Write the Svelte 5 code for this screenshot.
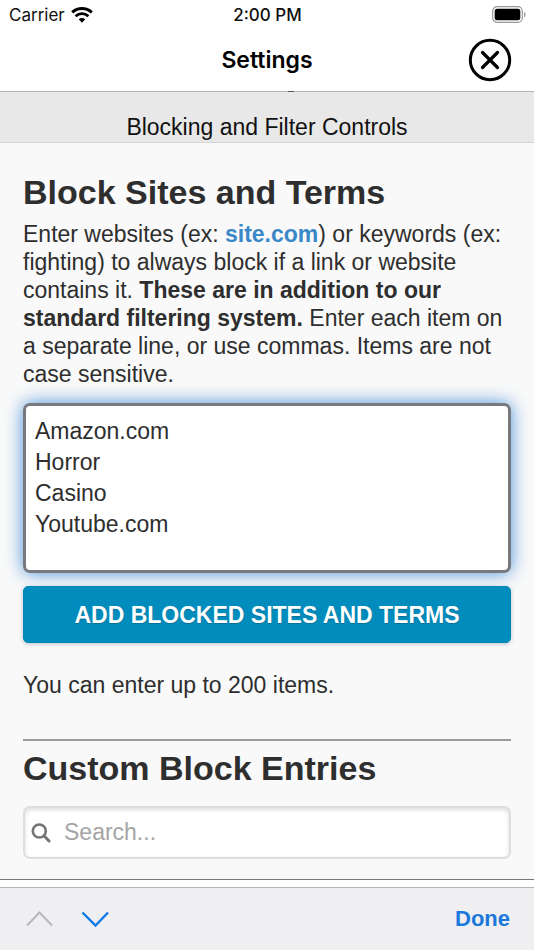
<script lang="ts">
	let terms = $state('Amazon.com\nHorror\nCasino\nYoutube.com');
	let search = $state('');
</script>

<div class="screen">
	<div class="status-bar">
		<div class="carrier">
			<span>Carrier</span>
			<svg width="22" height="16" viewBox="0 0 22 16" aria-hidden="true">
				<path d="M1.200 5.400C7 .3 15 .3 20.800 5.400" fill="none" stroke="#000" stroke-width="3" />
				<path d="M4.600 9.200c3.700-3.400 9.100-3.400 12.800 0" fill="none" stroke="#000" stroke-width="2.800" />
				<path d="M7.700 12.300c2-1.800 4.600-1.800 6.600 0L11 15.800z" fill="#000" />
			</svg>
		</div>
		<span class="time">2:00 PM</span>
		<svg class="battery" width="34" height="17" viewBox="0 0 34 17" aria-hidden="true">
			<rect x=".7" y=".7" width="29.600" height="15.600" rx="4.500" fill="#fff" stroke="#999" stroke-width="1.200" />
			<rect x="2.700" y="2.700" width="25.600" height="11.600" rx="2.500" fill="#000" />
			<path d="M32 5.700c2 .8 2 4.800 0 5.600z" fill="#999" />
		</svg>
	</div>

	<header class="nav-bar">
		<h1>Settings</h1>
		<button class="close" type="button" aria-label="Close">
			<svg width="44" height="44" viewBox="0 0 44 44" aria-hidden="true">
				<g fill="none" stroke="#000" stroke-linecap="round">
					<circle cx="22" cy="22" r="19.700" stroke-width="3" />
					<path d="M14.500 14.500l15 15M29.500 14.500l-15 15" stroke-width="3.200" />
				</g>
			</svg>
		</button>
	</header>

	<div class="section-bar">Blocking and Filter Controls</div>

	<main>
		<section>
			<h2><label for="terms">Block Sites and Terms</label></h2>
			<p>
				Enter websites (ex: <strong class="site">site.com</strong>) or keywords (ex: fighting) to
				always block if a link or website contains it.
				<strong>These are in addition to our standard filtering system.</strong>
				Enter each item on a separate line, or use commas. Items are not case sensitive.
			</p>
			<textarea id="terms" spellcheck="false" bind:value={terms}></textarea>
			<button class="add" type="button">ADD BLOCKED SITES AND TERMS</button>
			<p class="limit">You can enter up to 200 items.</p>
		</section>

		<hr />

		<section>
			<h2><label for="search">Custom Block Entries</label></h2>
			<div class="search">
				<svg width="20" height="20" viewBox="0 0 20 20" aria-hidden="true">
					<g fill="none" stroke="#757575" stroke-linecap="round">
						<circle cx="8.300" cy="8" r="6.500" stroke-width="2.600" />
						<path d="M13 12.800l5 5.200" stroke-width="3" />
					</g>
				</svg>
				<input id="search" type="text" placeholder="Search..." bind:value={search} />
			</div>
		</section>
	</main>

	<div class="keyboard-bar">
		<button type="button" aria-label="Previous field" disabled>
			<svg width="28" height="18" viewBox="0 0 28 18" aria-hidden="true">
				<path d="M2 15.500L14.500 2.500 27 15.500" fill="none" stroke="#b8b8ba" stroke-width="2" />
			</svg>
		</button>
		<button type="button" aria-label="Next field">
			<svg width="28" height="18" viewBox="0 0 28 18" aria-hidden="true">
				<path d="M1.500 2.500L14.500 15.500 27 2.500" fill="none" stroke="#0f78e6" stroke-width="2.400" />
			</svg>
		</button>
		<button class="done" type="button">Done</button>
	</div>
</div>

<style>
	:global(body) {
		margin: 0;
	}

	.screen {
		display: flex;
		flex-direction: column;
		min-height: 100vh;
		background: #fff;
		color: #2e2e2e;
		font-family: 'Liberation Sans', Arial, sans-serif;
		font-size: 23px;
	}

	button {
		padding: 0;
		border: 0;
		background: none;
		font: inherit;
	}

	svg {
		display: block;
	}

	.status-bar {
		display: grid;
		grid-template-columns: 1fr auto 1fr;
		align-items: center;
		height: 29px;
		padding: 0 8px 0 9px;
		box-sizing: border-box;
		color: #111;
		font-family: Inter, sans-serif;
		font-size: 17px;
	}

	.carrier {
		display: flex;
		align-items: center;
		gap: 6px;
	}

	.time {
		font-weight: 500;
	}

	.battery {
		justify-self: end;
	}

	.nav-bar {
		display: grid;
		grid-template-columns: 1fr auto 1fr;
		align-items: center;
		height: 63px;
		padding: 0 22px 1px;
		box-sizing: border-box;
		border-bottom: 1px solid #b4b4b4;
	}

	h1 {
		grid-column: 2;
		margin: 0;
		color: #000;
		font-family: Inter, sans-serif;
		font-size: 23px;
		font-weight: 600;
	}

	.close {
		justify-self: end;
	}

	.section-bar {
		position: relative;
		padding: 21px 0 1px;
		border-bottom: 1px solid #d4d4d4;
		background: #e8e8e8;
		color: #111;
		line-height: 28px;
		text-align: center;
	}

	/* tail of the scrolled title showing under the nav bar */
	.section-bar::before {
		position: absolute;
		top: -1px;
		left: 54%;
		width: 6px;
		height: 1px;
		background: #555;
		content: '';
	}

	main {
		flex: 1;
		padding: 31px 23px 20px;
		border-bottom: 1px solid #77777b;
		background: #f9f9f9;
	}

	h2 {
		margin: 0;
		font-size: 34px;
		line-height: 36px;
	}

	p {
		margin: 10px 0 15px;
		line-height: 28px;
	}

	.site {
		color: #3b88c8;
	}

	textarea {
		display: block;
		width: 100%;
		height: 170px;
		padding: 10px 9px;
		box-sizing: border-box;
		border: 3px solid #77797f;
		border-radius: 7px;
		outline: 0;
		box-shadow: 0 0 18px #4a90d9;
		background: #fff;
		color: #2e2e2e;
		font: inherit;
		line-height: 31px;
		resize: none;
	}

	.add {
		position: relative;
		display: block;
		width: 100%;
		height: 57px;
		margin: 13px 0 28px;
		padding-top: 2px;
		border: 1px solid #0587b4;
		border-radius: 5px;
		box-shadow: 0 1px 4px #b9c3cc;
		background: #008cbc;
		color: #fff;
		font-weight: 700;
		text-shadow: 0 1px 1px #087099;
	}

	.limit {
		margin: 0 0 40px;
	}

	hr {
		height: 2px;
		margin: 0 0 9px;
		border: 0;
		background: #9b9b9b;
	}

	.search {
		display: flex;
		align-items: center;
		gap: 13px;
		height: 53px;
		margin-top: 20px;
		padding: 0 6px;
		box-sizing: border-box;
		border: 2px solid #dedede;
		border-radius: 7px;
		box-shadow: inset 0 2px 4px #ddd;
		background: #fff;
	}

	.search input {
		flex: 1;
		min-width: 0;
		padding: 0;
		border: 0;
		outline: 0;
		background: transparent;
		color: #2e2e2e;
		font: inherit;
	}

	.search input::placeholder {
		color: #a5a5a5;
		opacity: 1;
	}

	.keyboard-bar {
		display: flex;
		align-items: center;
		gap: 28px;
		height: 63px;
		margin-top: 7px;
		padding: 0 24px 0 25px;
		box-sizing: border-box;
		border-top: 1px solid #b4b4b7;
		background: #efeff1;
	}

	.done {
		margin-left: auto;
		color: #1b78dc;
		font-weight: 700;
		font-size: 22px;
	}
</style>
